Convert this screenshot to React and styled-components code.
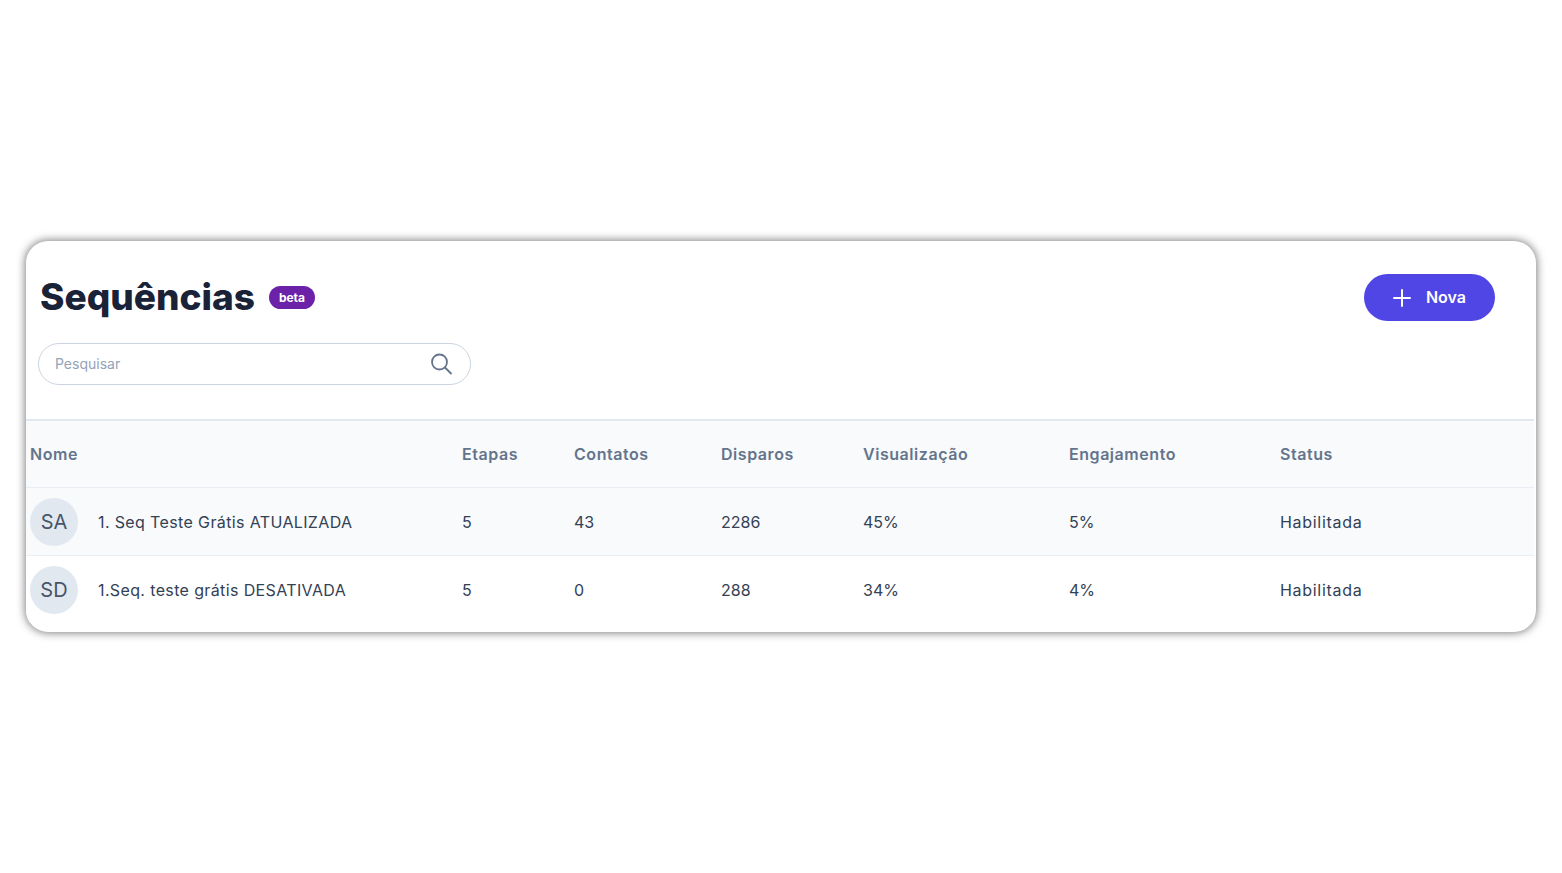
import React from "react"
import styled, { createGlobalStyle } from "styled-components"

const GlobalStyle = createGlobalStyle`
  html, body {
    margin: 0;
    padding: 0;
    background: #ffffff;
    font-family: "Inter", "Liberation Sans", sans-serif;
  }
`

const Page = styled.div`
  box-sizing: border-box;
  height: 873px;
  padding: 241px 26px 0;
  overflow: hidden;
`

const Card = styled.section`
  height: 391px;
  background: #ffffff;
  border-radius: 22px;
  box-shadow: 0 0 8px 1px rgba(0, 0, 0, 0.5);
  overflow: hidden;
`

const Header = styled.header`
  box-sizing: border-box;
  height: 178px;
  padding: 33px 41px 0 12px;
`

const TitleRow = styled.div`
  display: flex;
  align-items: center;
  justify-content: space-between;
  height: 47px;
`

const TitleGroup = styled.div`
  display: flex;
  align-items: center;
  gap: 14px;
  padding-left: 2px;
`

const Title = styled.h1`
  margin: 0;
  padding-bottom: 2px;
  font-size: 37px;
  line-height: 45px;
  font-weight: 800;
  letter-spacing: 0;
  color: #1a2238;
`

const Badge = styled.span`
  display: flex;
  align-items: center;
  justify-content: center;
  width: 46px;
  height: 23px;
  border-radius: 12px;
  background: #6b21a8;
  color: #ffffff;
  font-size: 12px;
  font-weight: 700;
`

const NewButton = styled.button`
  display: flex;
  align-items: center;
  justify-content: center;
  gap: 15px;
  width: 131px;
  height: 47px;
  padding: 0;
  border: 0;
  border-radius: 24px;
  background: #4f46e5;
  color: #ffffff;
  font-family: inherit;
  font-size: 16px;
  font-weight: 600;
  line-height: 45px;
`

const SearchBox = styled.div`
  box-sizing: border-box;
  display: flex;
  align-items: center;
  justify-content: space-between;
  width: 433px;
  height: 42px;
  margin-top: 22px;
  padding: 0 17px 0 16px;
  border: 1px solid #cbd5e1;
  border-radius: 21px;
`

const SearchInput = styled.input`
  flex: 1;
  min-width: 0;
  border: 0;
  outline: 0;
  padding: 0 0 2px;
  background: transparent;
  font-family: inherit;
  font-size: 14px;
  color: #334155;

  &::placeholder {
    color: #94a3b8;
    opacity: 1;
  }
`

const Row = styled.div`
  box-sizing: border-box;
  display: grid;
  grid-template-columns: 432px 112px 147px 142px 206px 211px 1fr;
  align-items: center;
  width: 1508px;
  height: ${(p) => p.$height}px;
  padding-left: 4px;
  background: ${(p) => (p.$tinted ? "#f8fafc" : "#ffffff")};
  border-top: ${(p) => p.$rule}px solid ${(p) => (p.$head ? "#e2e8f0" : "#e9eef5")};
  font-size: 16px;
  color: ${(p) => (p.$head ? "#64748b" : "#334155")};
  font-weight: ${(p) => (p.$head ? 600 : 400)};
  letter-spacing: ${(p) => (p.$head ? "0.55px" : "0")};
`

const NameCell = styled.div`
  display: flex;
  align-items: center;
  gap: 20px;
`

const NameText = styled.span`
  letter-spacing: 0.37px;
`

const StatusText = styled.span`
  letter-spacing: 0.7px;
`

const Avatar = styled.span`
  display: flex;
  align-items: center;
  justify-content: center;
  width: 48px;
  height: 48px;
  border-radius: 50%;
  background: #e2e8f0;
  color: #475569;
  font-size: 20px;
`

const columns = ["Nome", "Etapas", "Contatos", "Disparos", "Visualização", "Engajamento", "Status"]

const sequences = [
  { id: 1, initials: "SA", name: "1. Seq Teste Grátis ATUALIZADA", steps: 5, contacts: 43, sent: 2286, views: "45%", engagement: "5%", status: "Habilitada" },
  { id: 2, initials: "SD", name: "1.Seq. teste grátis DESATIVADA", steps: 5, contacts: 0, sent: 288, views: "34%", engagement: "4%", status: "Habilitada" },
]

const SearchIcon = () => (
  <svg width="24" height="24" viewBox="0 0 24 24" fill="none" stroke="#64748b" strokeWidth="1.8" strokeLinecap="round">
    <circle cx="10.5" cy="10" r="7.5" />
    <path d="M16 15.5l6 6" />
  </svg>
)

const PlusIcon = () => (
  <svg width="18" height="18" viewBox="0 0 18 18" fill="none" stroke="#ffffff" strokeWidth="2" strokeLinecap="round">
    <path d="M9 1v16M1 9h16" />
  </svg>
)

const App = () => {
  return (
    <Page>
      <GlobalStyle />
      <Card>
        <Header>
          <TitleRow>
            <TitleGroup>
              <Title>Sequências</Title>
              <Badge>beta</Badge>
            </TitleGroup>
            <NewButton>
              <PlusIcon />
              Nova
            </NewButton>
          </TitleRow>
          <SearchBox>
            <SearchInput placeholder="Pesquisar" />
            <SearchIcon />
          </SearchBox>
        </Header>
        <Row $head $tinted $rule={2} $height={68}>
          {columns.map((c) => (
            <div key={c}>{c}</div>
          ))}
        </Row>
        {sequences.map((s, i) => (
          <Row key={s.id} $tinted={i === 0} $rule={1} $height={68}>
            <NameCell>
              <Avatar>{s.initials}</Avatar>
              <NameText>{s.name}</NameText>
            </NameCell>
            <div>{s.steps}</div>
            <div>{s.contacts}</div>
            <div>{s.sent}</div>
            <div>{s.views}</div>
            <div>{s.engagement}</div>
            <StatusText>{s.status}</StatusText>
          </Row>
        ))}
      </Card>
    </Page>
  )
}

export default App
